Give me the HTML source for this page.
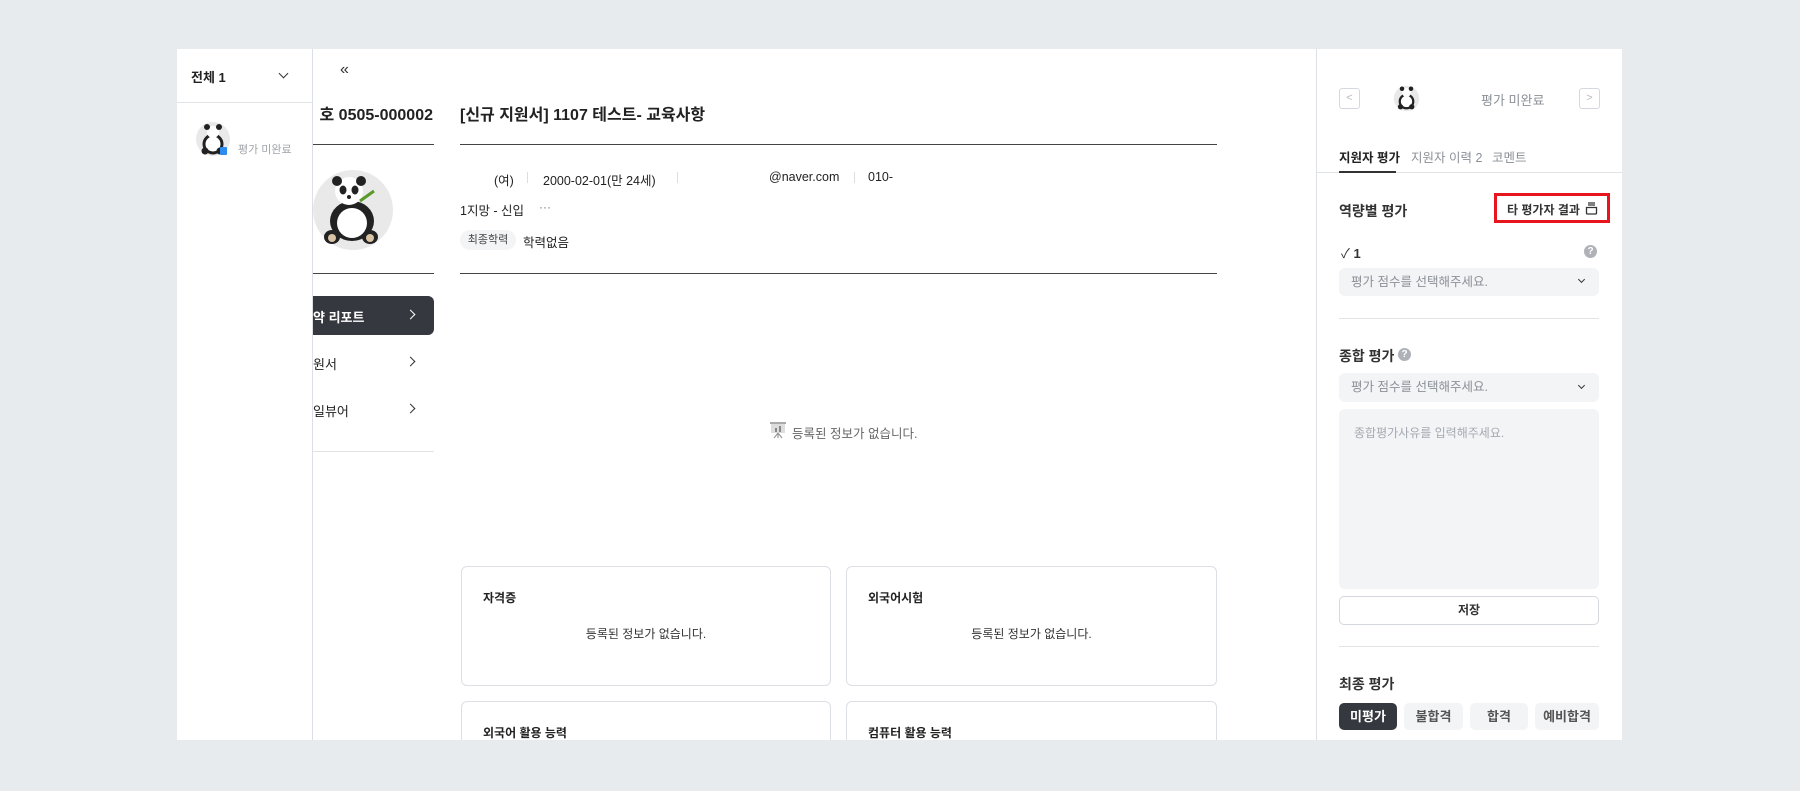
<!DOCTYPE html>
<html><head><meta charset="utf-8">
<style>
*{box-sizing:border-box;margin:0;padding:0}
body{width:1800px;height:791px;background:#e8ebee;font-family:"Liberation Sans","Noto Sans CJK KR",sans-serif;color:#222;position:relative;overflow:hidden;font-size:14px}
.a{position:absolute;white-space:nowrap}
.panel{position:absolute;left:177px;top:49px;width:1445px;height:691px;background:#fff;overflow:hidden}
.line{position:absolute;height:1px;background:#444}
.lg{position:absolute;height:1px;background:#e1e3e6}
.chev{position:absolute;width:7px;height:7px;border-right:1.6px solid #333;border-bottom:1.6px solid #333}
.card{position:absolute;border:1px solid #dcdfe3;border-radius:6px;background:#fff}
.sel{position:absolute;left:1339px;width:260px;background:#f3f4f6;border-radius:6px;color:#8b9097;font-size:13px;padding-left:12px}
.btn{position:absolute;top:703px;height:27px;border-radius:5px;background:#f3f4f6;color:#555;font-size:13px;font-weight:bold;text-align:center;line-height:27px}
</style></head><body>
<div class="panel"></div>
<!-- sidebar -->
<div class="a" style="left:312px;top:49px;width:1px;height:691px;background:#dcdfe3"></div>
<div class="a" style="left:191px;top:67px;font-size:13px;font-weight:bold">전체 1</div>
<div class="chev" style="left:280px;top:70px;transform:rotate(45deg)"></div>
<div class="lg" style="left:177px;top:102px;width:135px"></div>
<svg class="a" style="left:196px;top:122px" width="36" height="36" viewBox="0 0 36 36"><circle cx="17" cy="17" r="17" fill="#e9e9e9"/><circle cx="17" cy="22" r="9" fill="#fff" stroke="#222" stroke-width="3"/><circle cx="17" cy="10" r="6" fill="#fff"/><circle cx="11" cy="5" r="3" fill="#222"/><circle cx="23" cy="5" r="3" fill="#222"/><circle cx="9" cy="29" r="3.5" fill="#222"/><circle cx="24" cy="29" r="3.5" fill="#222"/><rect x="24" y="25" width="7" height="8" rx="1" fill="#2d8cf0"/></svg>
<div class="a" style="left:238px;top:141px;font-size:11px;color:#a0a4aa">평가 미완료</div>
<!-- middle col -->
<div class="a" style="left:340px;top:61px;font-size:16px;color:#333">«</div>
<div class="a" style="left:313px;top:101px;font-size:16px;font-weight:bold;width:120px;overflow:hidden;direction:rtl">호 0505-000002</div>
<div class="line" style="left:313px;top:144px;width:121px"></div>
<svg class="a" style="left:312px;top:169px" width="82" height="82" viewBox="0 0 82 82"><circle cx="41" cy="41" r="40" fill="#e9e9e9"/><ellipse cx="40" cy="52" rx="22" ry="20" fill="#222"/><ellipse cx="40" cy="54" rx="15" ry="15" fill="#fff"/><circle cx="37" cy="22" r="14" fill="#fff"/><circle cx="25" cy="12" r="5" fill="#222"/><circle cx="49" cy="12" r="5" fill="#222"/><ellipse cx="31" cy="21" rx="3.5" ry="4.5" fill="#222"/><ellipse cx="43" cy="21" rx="3.5" ry="4.5" fill="#222"/><circle cx="37" cy="28" r="2" fill="#222"/><path d="M48 32 L62 22" stroke="#5a9a2a" stroke-width="3"/><ellipse cx="20" cy="68" rx="8" ry="7" fill="#222"/><ellipse cx="58" cy="68" rx="8" ry="7" fill="#222"/><ellipse cx="20" cy="69" rx="4" ry="4" fill="#d8c3a5"/><ellipse cx="58" cy="69" rx="4" ry="4" fill="#d8c3a5"/></svg>
<div class="line" style="left:313px;top:273px;width:121px"></div>
<div class="a" style="left:313px;top:296px;width:121px;height:39px;background:#35393f;border-radius:0 6px 6px 0"></div>
<div class="a" style="left:313px;top:307px;color:#fff;font-weight:bold;font-size:13px">약 리포트</div>
<div class="chev" style="left:407px;top:311px;transform:rotate(-45deg);border-color:#fff"></div>
<div class="a" style="left:313px;top:354px;font-size:13px">원서</div>
<div class="chev" style="left:407px;top:358px;transform:rotate(-45deg)"></div>
<div class="a" style="left:313px;top:401px;font-size:13px">일뷰어</div>
<div class="chev" style="left:407px;top:405px;transform:rotate(-45deg)"></div>
<div class="lg" style="left:313px;top:451px;width:121px"></div>
<!-- main -->
<div class="a" style="left:460px;top:101px;font-size:16px;font-weight:bold">[신규 지원서] 1107 테스트- 교육사항</div>
<div class="line" style="left:460px;top:144px;width:757px"></div>
<div class="a" style="left:494px;top:170px;font-size:12.5px">(여)</div>
<div class="a" style="left:527px;top:172px;width:1px;height:11px;background:#ddd"></div>
<div class="a" style="left:543px;top:170px;font-size:12.5px">2000-02-01(만 24세)</div>
<div class="a" style="left:677px;top:172px;width:1px;height:11px;background:#ddd"></div>
<div class="a" style="left:769px;top:170px;font-size:12.5px">@naver.com</div>
<div class="a" style="left:854px;top:172px;width:1px;height:11px;background:#ddd"></div>
<div class="a" style="left:868px;top:170px;font-size:12.5px">010-</div>
<div class="a" style="left:460px;top:200px;font-size:12.5px">1지망 - 신입</div>
<div class="a" style="left:539px;top:200px;font-size:12px;color:#777">···</div>
<div class="a" style="left:460px;top:230px;width:56px;height:20px;background:#f3f4f6;border-radius:10px;font-size:11px;text-align:center;line-height:20px;color:#444">최종학력</div>
<div class="a" style="left:523px;top:232px;font-size:12.5px">학력없음</div>
<div class="line" style="left:460px;top:273px;width:757px"></div>
<svg class="a" style="left:769px;top:421px" width="18" height="18" viewBox="0 0 18 18"><rect x="1" y="1" width="16" height="2" fill="#aaa"/><rect x="2" y="3" width="14" height="9" fill="#ddd"/><rect x="6" y="7" width="2" height="4" fill="#888"/><rect x="10" y="5" width="2" height="6" fill="#888"/><path d="M9 12 L5 17 M9 12 L13 17 M9 12 V17" stroke="#999" stroke-width="1.2"/></svg>
<div class="a" style="left:792px;top:423px;font-size:12.5px;color:#666">등록된 정보가 없습니다.</div>
<div class="card" style="left:461px;top:566px;width:370px;height:120px"></div>
<div class="card" style="left:846px;top:566px;width:371px;height:120px"></div>
<div class="a" style="left:483px;top:589px;font-size:12px;font-weight:bold">자격증</div>
<div class="a" style="left:868px;top:589px;font-size:12px;font-weight:bold">외국어시험</div>
<div class="a" style="left:461px;top:625px;width:370px;text-align:center;font-size:12px;color:#333">등록된 정보가 없습니다.</div>
<div class="a" style="left:846px;top:625px;width:371px;text-align:center;font-size:12px;color:#333">등록된 정보가 없습니다.</div>
<div class="card" style="left:461px;top:701px;width:370px;height:80px"></div>
<div class="card" style="left:846px;top:701px;width:371px;height:80px"></div>
<div class="a" style="left:483px;top:724px;font-size:12px;font-weight:bold">외국어 활용 능력</div>
<div class="a" style="left:868px;top:724px;font-size:12px;font-weight:bold">컴퓨터 활용 능력</div>
<div class="a" style="left:0;top:740px;width:1800px;height:51px;background:#e8ebee"></div>
<!-- right panel -->
<div class="a" style="left:1316px;top:49px;width:1px;height:691px;background:#dcdfe3"></div>
<div class="a" style="left:1339px;top:88px;width:21px;height:21px;border:1px solid #d5d8dc;border-radius:3px;color:#bbb;font-size:11px;text-align:center;line-height:19px">&lt;</div>
<div class="a" style="left:1579px;top:88px;width:21px;height:21px;border:1px solid #d5d8dc;border-radius:3px;color:#bbb;font-size:11px;text-align:center;line-height:19px">&gt;</div>
<svg class="a" style="left:1393px;top:85px" width="27" height="27" viewBox="0 0 36 36"><circle cx="18" cy="18" r="17" fill="#e9e9e9"/><circle cx="18" cy="22" r="9" fill="#fff" stroke="#222" stroke-width="3"/><circle cx="18" cy="10" r="6" fill="#fff"/><circle cx="12" cy="5" r="3" fill="#222"/><circle cx="24" cy="5" r="3" fill="#222"/><circle cx="10" cy="29" r="3.5" fill="#222"/><circle cx="25" cy="29" r="3.5" fill="#222"/></svg>
<div class="a" style="left:1481px;top:90px;font-size:13px;color:#8b9097">평가 미완료</div>
<div class="a" style="left:1339px;top:147px;font-size:12.5px;font-weight:bold">지원자 평가</div>
<div class="a" style="left:1411px;top:147px;font-size:12.5px;color:#8b9097">지원자 이력 2</div>
<div class="a" style="left:1492px;top:147px;font-size:12.5px;color:#8b9097">코멘트</div>
<div class="lg" style="left:1317px;top:172px;width:305px"></div>
<div class="a" style="left:1339px;top:171px;width:57px;height:2px;background:#333"></div>
<div class="a" style="left:1339px;top:201px;font-size:14px;font-weight:bold;color:#333">역량별 평가</div>
<div class="a" style="left:1494px;top:193px;width:116px;height:30px;border:3px solid #e8141e"></div>
<div class="a" style="left:1507px;top:201px;font-size:12px;font-weight:bold;color:#333">타 평가자 결과</div>
<svg class="a" style="left:1585px;top:202px" width="13" height="13" viewBox="0 0 13 13"><path d="M3 3 H10 M1.5 5.5 H11.5 V11 Q11.5 12 10.5 12 H2.5 Q1.5 12 1.5 11 Z M3 1 H10" stroke="#333" stroke-width="1.3" fill="none"/></svg>
<div class="a" style="left:1341px;top:243px;font-size:13px;color:#333">✓ <b>1</b></div>
<div class="a" style="left:1584px;top:245px;width:13px;height:13px;border-radius:50%;background:#aeb2b8;color:#fff;font-size:10px;font-weight:bold;text-align:center;line-height:13px">?</div>
<div class="sel" style="top:268px;height:28px;line-height:28px;font-size:12.5px">평가 점수를 선택해주세요.</div>
<div class="chev" style="left:1579px;top:277px;width:5px;height:5px;transform:rotate(45deg)"></div>
<div class="lg" style="left:1339px;top:318px;width:260px"></div>
<div class="a" style="left:1339px;top:346px;font-size:14px;font-weight:bold;color:#333">종합 평가</div>
<div class="a" style="left:1398px;top:348px;width:13px;height:13px;border-radius:50%;background:#aeb2b8;color:#fff;font-size:10px;font-weight:bold;text-align:center;line-height:13px">?</div>
<div class="sel" style="top:373px;height:29px;line-height:29px;font-size:12.5px">평가 점수를 선택해주세요.</div>
<div class="chev" style="left:1579px;top:383px;width:5px;height:5px;transform:rotate(45deg)"></div>
<div class="sel" style="top:409px;height:180px;padding:15px;color:#a5aab0;font-size:12px">종합평가사유를 입력해주세요.</div>
<div class="a" style="left:1339px;top:596px;width:260px;height:29px;border:1px solid #d5d8dc;border-radius:5px;text-align:center;line-height:27px;font-size:12px;font-weight:bold;color:#333">저장</div>
<div class="lg" style="left:1339px;top:646px;width:260px"></div>
<div class="a" style="left:1339px;top:674px;font-size:14px;font-weight:bold;color:#333">최종 평가</div>
<div class="btn" style="left:1339px;width:58px;background:#35393f;color:#fff">미평가</div>
<div class="btn" style="left:1404px;width:59px">불합격</div>
<div class="btn" style="left:1470px;width:58px">합격</div>
<div class="btn" style="left:1535px;width:64px">예비합격</div>
</body></html>
